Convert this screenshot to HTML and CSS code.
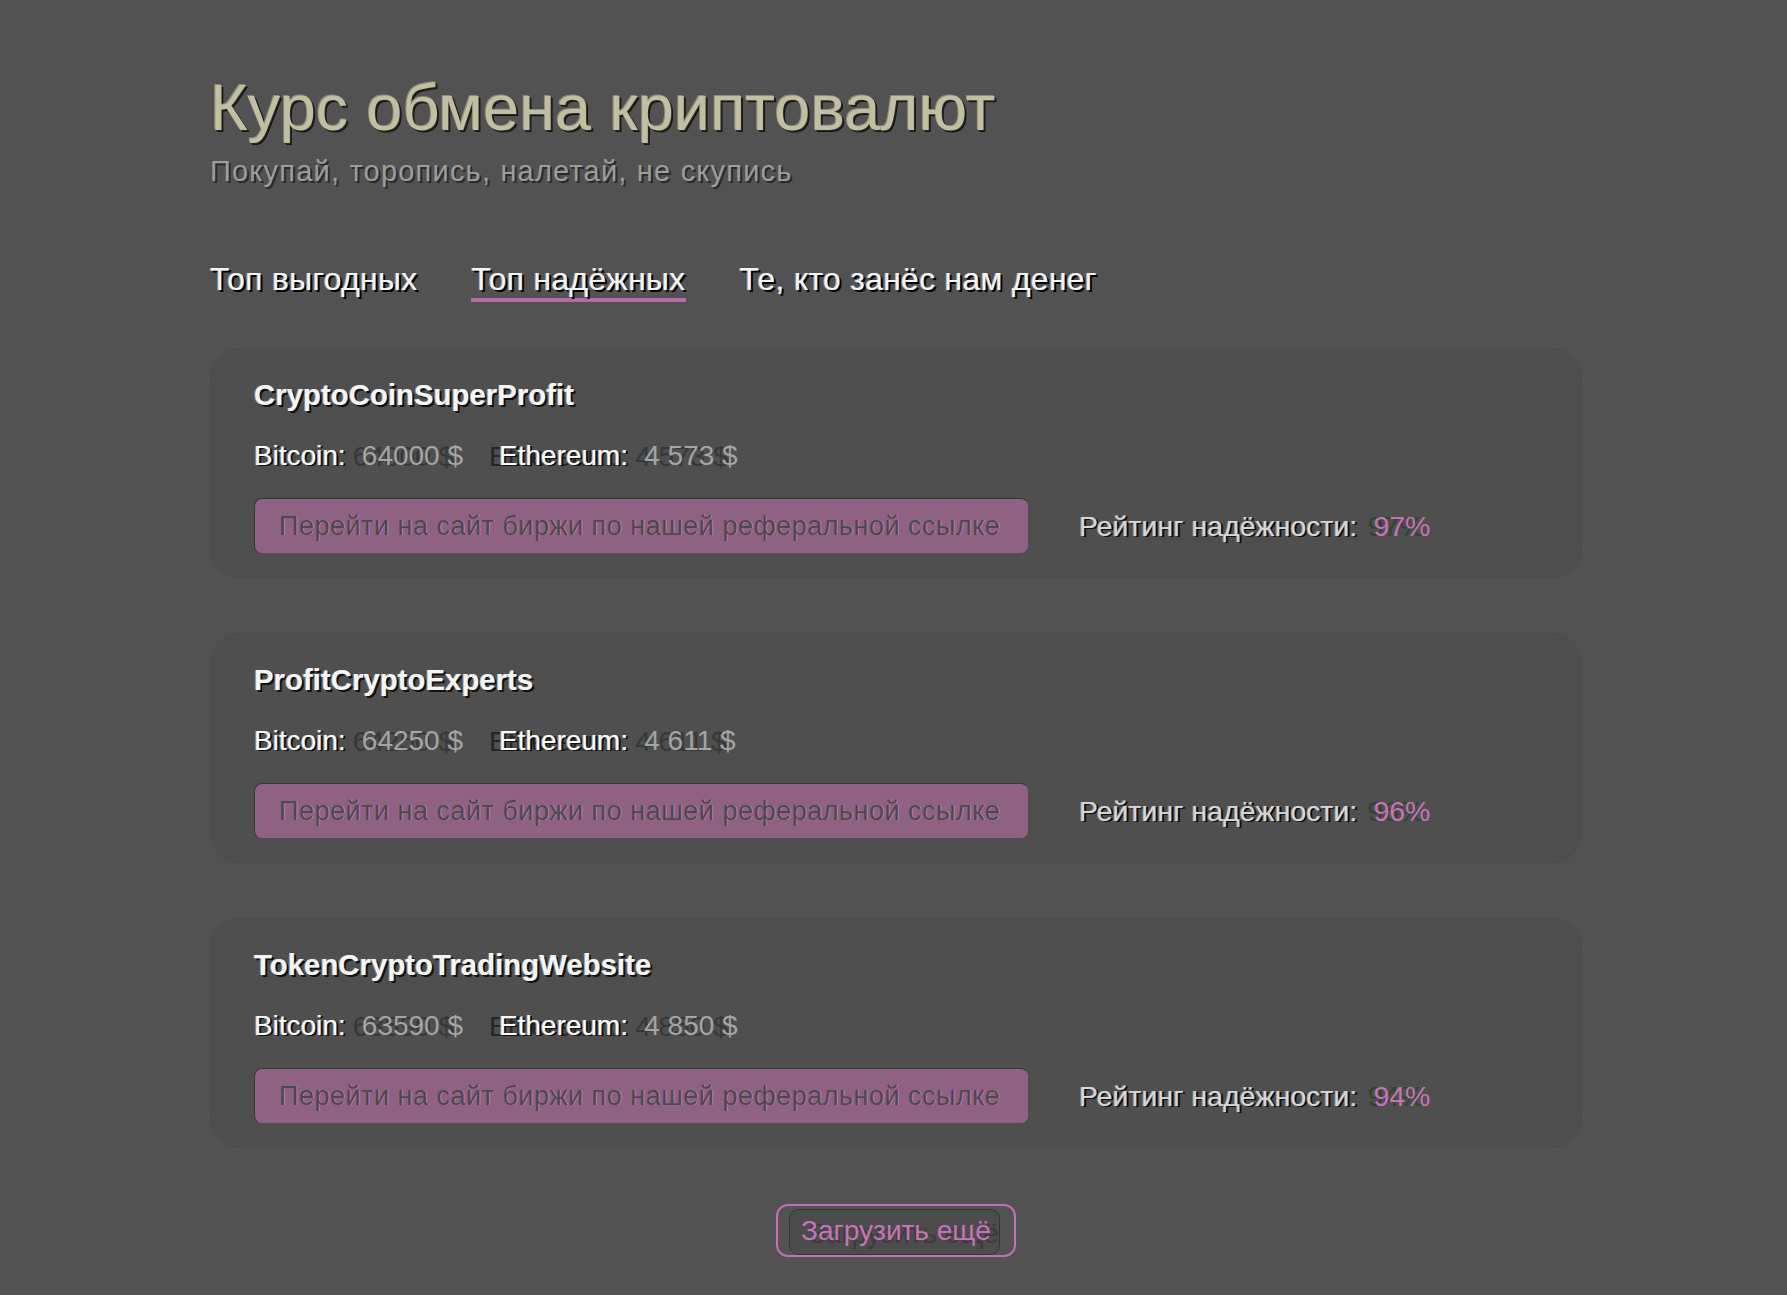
FILE: index.html
```html
<!DOCTYPE html>
<html lang="ru">
<head>
<meta charset="utf-8">
<title>Курс обмена криптовалют</title>
<link rel="stylesheet" href="styles.css">
</head>
<body>
<main class="page">
  <header class="header">
    <h1 class="title">Курс обмена криптовалют</h1>
    <p class="subtitle">Покупай, торопись, налетай, не скупись</p>
  </header>

  <nav class="tabs">
    <span class="tab">Топ выгодных</span>
    <span class="tab tab-active">Топ надёжных</span>
    <span class="tab">Те, кто занёс нам денег</span>
  </nav>

  <section class="list">
    <article class="card">
      <h2 class="card-title">CryptoCoinSuperProfit</h2>
      <div class="prices">
        <span class="price"><span class="price-label">Bitcoin:</span><span class="price-value">64000 $</span></span>
        <span class="price"><span class="price-label eth">Ethereum:</span><span class="price-value">4 573 $</span></span>
      </div>
      <div class="card-bottom">
        <a class="ref-button">Перейти на сайт биржи по нашей реферальной ссылке</a>
        <span class="rating"><span class="rating-label">Рейтинг надёжности:</span><span class="rating-value">97%</span></span>
      </div>
    </article>

    <article class="card">
      <h2 class="card-title">ProfitCryptoExperts</h2>
      <div class="prices">
        <span class="price"><span class="price-label">Bitcoin:</span><span class="price-value">64250 $</span></span>
        <span class="price"><span class="price-label eth">Ethereum:</span><span class="price-value">4 611 $</span></span>
      </div>
      <div class="card-bottom">
        <a class="ref-button">Перейти на сайт биржи по нашей реферальной ссылке</a>
        <span class="rating"><span class="rating-label">Рейтинг надёжности:</span><span class="rating-value">96%</span></span>
      </div>
    </article>

    <article class="card">
      <h2 class="card-title">TokenCryptoTradingWebsite</h2>
      <div class="prices">
        <span class="price"><span class="price-label">Bitcoin:</span><span class="price-value">63590 $</span></span>
        <span class="price"><span class="price-label eth">Ethereum:</span><span class="price-value">4 850 $</span></span>
      </div>
      <div class="card-bottom">
        <a class="ref-button">Перейти на сайт биржи по нашей реферальной ссылке</a>
        <span class="rating"><span class="rating-label">Рейтинг надёжности:</span><span class="rating-value">94%</span></span>
      </div>
    </article>
  </section>

  <div class="more-wrap">
    <button class="more-button">Загрузить ещё</button>
  </div>
</main>
</body>
</html>
```

FILE: styles.css
```css
html, body {
  margin: 0;
  padding: 0;
}

body {
  background: #525252;
  font-family: "Liberation Sans", Arial, sans-serif;
  min-height: 1295px;
}

.page {
  width: 1372px;
  margin-left: 210px;
  padding-top: 71px;
  padding-bottom: 37px;
}

.header {
  display: flex;
  flex-direction: column;
}

.title {
  margin: 0;
  font-family: "Liberation Sans", Arial, sans-serif;
  font-weight: 400;
  font-size: 65px;
  line-height: 74px;
  color: #c0bfa2;
  text-shadow: -1px -1px 0 #8e8d7a, 1px 1px 0 #2a2a22, 2px 2px 0 #151515;
}

.subtitle {
  margin: 10px 0 0;
  font-family: "Liberation Sans", Arial, sans-serif;
  font-size: 29px;
  line-height: 33px;
  letter-spacing: 1.2px;
  color: #9d9d9d;
  text-shadow: 2px 2px 0 #2a2a2a;
}

.tabs {
  display: flex;
  gap: 54px;
  margin-top: 73px;
}

.tab {
  font-family: "Liberation Sans", Arial, sans-serif;
  font-size: 32px;
  line-height: 37px;
  letter-spacing: 0.25px;
  color: #f4f4f4;
  border-bottom: 4px solid transparent;
  text-shadow: -1px 0 0 #9a9a9a, 2px 2px 0 #000;
}

.tab-active {
  border-bottom-color: #b66da6;
}

.list {
  display: flex;
  flex-direction: column;
  gap: 55px;
  margin-top: 46px;
}

.card {
  box-sizing: border-box;
  height: 230px;
  padding: 29px 43px 25px;
  background: #4e4f4e;
  border: 1px solid #4b4c4b;
  border-radius: 30px;
  display: flex;
  flex-direction: column;
}

.card-title {
  margin: 0;
  font-family: "Liberation Sans", Arial, sans-serif;
  font-weight: 700;
  font-size: 29.4px;
  line-height: 33px;
  color: #f5f5f5;
  text-shadow: -1px 0 0 #8a8a8a, 2px 2px 0 #111;
}

.prices {
  display: flex;
  gap: 36px;
  margin-top: 30px;
  font-family: "Liberation Sans", Arial, sans-serif;
  font-size: 28px;
  line-height: 30px;
}

.price {
  display: inline-flex;
  gap: 16px;
}

.price-label {
  color: #fafafa;
  text-shadow: -1px 0 0 #9a9a9a, 2px 1px 0 #111;
}

.price-label.eth {
  text-shadow: -1px 0 0 #9a9a9a, 2px 1px 0 #111, -10px 1px 0 #262626;
}

.price-value {
  color: #a5a5a5;
  text-shadow: -9px 1px 0 #383838;
}

.card-bottom {
  display: flex;
  align-items: center;
  gap: 50px;
  margin-top: 27px;
}

.ref-button {
  box-sizing: border-box;
  width: 775px;
  height: 56px;
  padding-left: 24px;
  display: flex;
  align-items: center;
  background: #8f6284;
  border: 1px solid #2f3d2f;
  border-right-color: #5a4956;
  border-bottom-color: #5a4956;
  border-radius: 8px;
  font-family: "Liberation Sans", Arial, sans-serif;
  font-size: 27px;
  letter-spacing: 0.5px;
  color: #4a4a4a;
  text-shadow: 1px 0 0 #c57ab6;
  cursor: pointer;
  white-space: nowrap;
}

.rating {
  display: inline-flex;
  gap: 16px;
  font-family: "Liberation Sans", Arial, sans-serif;
  font-size: 28.5px;
}

.rating-label {
  color: #d6d6d6;
  text-shadow: -1px 0 0 #8a8a8a, 2px 1px 0 #0e0e0e;
}

.rating-value {
  color: #c873b9;
  text-shadow: -6px 0 0 #2d472d;
}

.more-wrap {
  display: flex;
  justify-content: center;
  margin-top: 56px;
}

.more-button {
  position: relative;
  box-sizing: border-box;
  width: 240px;
  height: 53px;
  background: transparent;
  border: 2px solid #c46fb3;
  border-radius: 12px;
  font-family: "Liberation Sans", Arial, sans-serif;
  font-size: 28px;
  color: #c874b8;
  text-shadow: 8px 3px 0 #3d3d3d;
  cursor: pointer;
  padding: 0;
}

.more-button::before {
  content: "";
  position: absolute;
  left: 11px;
  top: 3px;
  right: 14px;
  bottom: 0;
  border: 1px solid #2e3c2e;
  border-radius: 10px;
  background: rgba(60, 60, 60, 0.25);
  z-index: -1;
}
```
